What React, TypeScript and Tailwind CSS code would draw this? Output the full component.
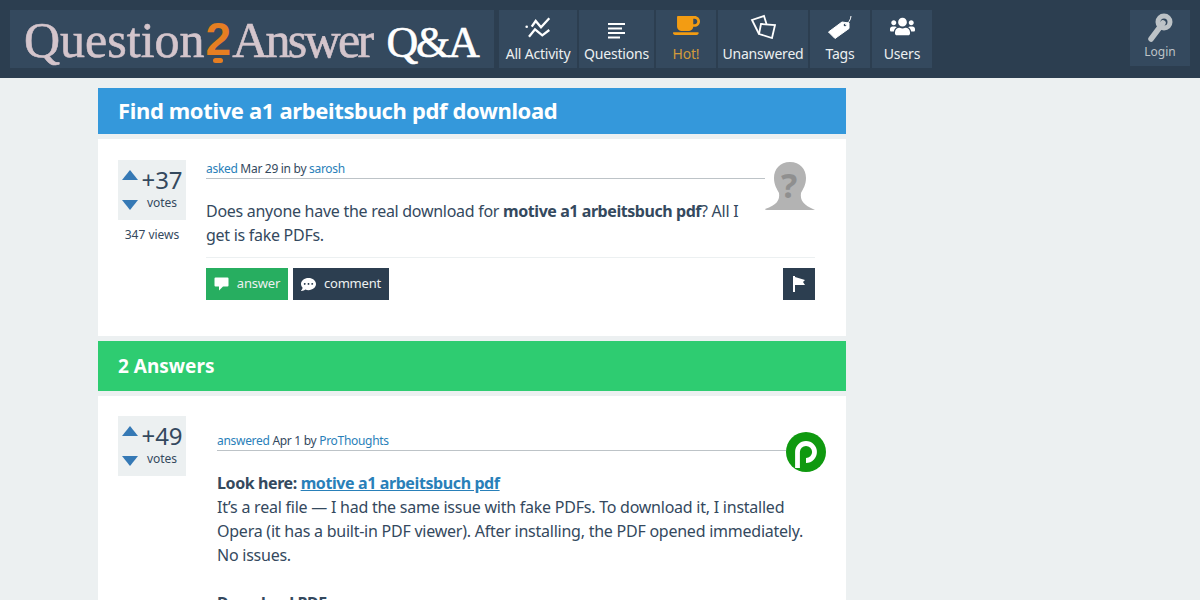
import { ReactNode } from "react";
import { FaCoffee, FaUsers, FaCommentDots } from "react-icons/fa";

const ActivityIcon = () => (
  <svg width="28" height="24" viewBox="0 0 28 24" fill="none" stroke="white" strokeWidth="2.3">
    <path d="M7.7 11.7 L11.7 6 L17 12.3 L25.3 3.3" />
    <path d="M5 21.7 L11 14.3 L18.3 20.3 L25.3 15" />
    <circle cx="2.7" cy="11.7" r="1.3" fill="white" stroke="none" />
  </svg>
);

const LinesIcon = () => (
  <svg width="17" height="16" viewBox="0 0 17 16" fill="white">
    <rect x="0" y="0" width="17" height="2" />
    <rect x="0" y="4.5" width="14" height="2" />
    <rect x="0" y="9" width="17" height="2" />
    <rect x="0" y="13.5" width="12" height="2" />
  </svg>
);

const CardsIcon = () => (
  <svg width="26" height="26" viewBox="0 0 26 26" fill="none" stroke="white" strokeWidth="1.8">
    <path d="M9 21 L2 7 L14 3 L16.5 11" />
    <path d="M11 11 L25 12 L22 25 L9 21 Z" />
  </svg>
);

const TagIcon = () => (
  <svg width="24" height="26" viewBox="0 0 24 26">
    <path d="M0.5 19 L14 9 L21 10 L21 15.5 L7 25.5 Z" fill="white" stroke="white" strokeLinejoin="round" />
    <circle cx="17" cy="12" r="1.3" fill="#34495e" />
    <path d="M17 12 Q22.5 9 23 3" fill="none" stroke="white" strokeWidth="1" />
  </svg>
);

const KeyIcon = () => (
  <svg width="26" height="30" viewBox="0 0 26 30">
    <path d="M16 10 L4 26" stroke="#bdc3c7" strokeWidth="5.5" strokeLinecap="round" />
    <circle cx="17" cy="9" r="6" fill="none" stroke="#bdc3c7" strokeWidth="5" />
  </svg>
);

const FlagIcon = () => (
  <svg width="16" height="18" viewBox="0 0 16 18" fill="white">
    <rect x="2" y="1" width="2" height="16" />
    <path d="M4 2 L14 5 L12 7 L14 10 L4 10 Z" />
  </svg>
);

const BubbleIcon = () => (
  <svg width="15" height="14" viewBox="0 0 15 14" fill="white">
    <path d="M1.5 0.5 H13.5 Q14.5 0.5 14.5 1.5 V8.5 Q14.5 9.5 13.5 9.5 H9 L5 13.5 V9.5 H1.5 Q0.5 9.5 0.5 8.5 V1.5 Q0.5 0.5 1.5 0.5 Z" />
  </svg>
);

const NavItem = ({ icon, label, className, hot }: { icon: ReactNode; label: string; className: string; hot?: boolean }) => (
  <a className={`flex h-[58px] flex-col items-center bg-[#34495e] ${className}`}>
    <div className="flex h-[29px] items-end justify-center">{icon}</div>
    <span className={`mt-[5px] text-[14px] leading-[20px] tracking-[-0.2px] ${hot ? "text-[#d19a3c]" : "text-[#ecf0f1]"}`}>
      {label}
    </span>
  </a>
);

const VoteBox = ({ votes }: { votes: string }) => (
  <div className="flex h-[60px] w-[68px] bg-[#ecf0f1]">
    <div className="ml-1 flex w-4 flex-col items-center pt-[10px]">
      <div className="h-0 w-0 border-x-8 border-b-[10px] border-x-transparent border-b-[#3579b5]" />
      <div className="mt-[20px] h-0 w-0 border-x-8 border-t-[10px] border-x-transparent border-t-[#3579b5]" />
    </div>
    <div className="flex-1 text-center">
      <div className="mt-[6px] text-[24px] leading-[28px] text-[#34495e]">{votes}</div>
      <div className="text-[12px] leading-[18px] text-[#34495e]">votes</div>
    </div>
  </div>
);

const SilhouetteAvatar = () => (
  <svg width="50" height="48" viewBox="0 0 50 48" className="shrink-0">
    <path
      d="M25 0 C15 0 9 7 9 16 C9 23 12 27 14 31 C15 38 12 43 0 47 Q0 48 2 48 L50 48 C38 43 35 38 36 31 C38 27 41 23 41 16 C41 7 35 0 25 0 Z"
      fill="#b3b3b3"
    />
    <text x="24" y="36" textAnchor="middle" fontSize="34" fontWeight="700" fill="#8f8f8f" fontFamily="'Noto Sans',sans-serif">
      ?
    </text>
  </svg>
);

const GreenAvatar = () => (
  <svg width="40" height="40" viewBox="0 0 40 40" className="shrink-0">
    <circle cx="20" cy="20" r="20" fill="#0f990f" />
    <path d="M11.5 36 L11.5 20 A8.5 8.5 0 1 1 20 28.5" fill="none" stroke="white" strokeWidth="4.8" />
  </svg>
);

const Meta = ({ children }: { children: ReactNode }) => (
  <div className="text-[12px] leading-[18px] tracking-[-0.3px] text-[#34495e]">{children}</div>
);

const Blue = ({ children }: { children: ReactNode }) => <a className="text-[#2980b9]">{children}</a>;

export default function App() {
  return (
    <div className="h-[600px] overflow-hidden bg-[#ecf0f1] font-['Noto_Sans','Open_Sans',sans-serif]">
      <header className="flex h-[78px] items-start justify-between bg-[#2c3e50] px-[10px] pt-[10px]">
        <div className="flex gap-[5px]">
          <div className="flex h-[58px] w-[484px] items-baseline bg-[#34495e] pl-[14px] pt-[5px] font-['Liberation_Serif',serif] text-[50px] leading-none text-[#d4c5cc] [-webkit-text-stroke:0.6px_#d4c5cc]">
            <span>Question</span>
            <span className="relative ml-[1px] -translate-y-[2px] font-['Liberation_Sans',sans-serif] text-[46px] font-bold text-[#e67e22] [-webkit-text-stroke:0px_#e67e22]">
              2
              <span className="absolute bottom-[-1px] left-[7px] h-[5px] w-[10px] rounded-full bg-[#e67e22]" />
            </span>
            <span className="ml-[1px] tracking-[-2.7px]">Answer</span>
            <span className="ml-[15px] text-[44px] tracking-[-2.2px] text-white [-webkit-text-stroke:0.6px_#ffffff]">Q&amp;A</span>
          </div>
          <nav className="flex gap-[2px]">
            <NavItem className="w-[78px]" icon={<ActivityIcon />} label="All Activity" />
            <NavItem className="w-[75px]" icon={<LinesIcon />} label="Questions" />
            <NavItem className="w-[60px]" icon={<FaCoffee size={27} color="#f39c12" />} label="Hot!" hot />
            <NavItem className="w-[90px]" icon={<CardsIcon />} label="Unanswered" />
            <NavItem className="w-[60px]" icon={<TagIcon />} label="Tags" />
            <NavItem className="w-[60px]" icon={<FaUsers size={25} color="white" />} label="Users" />
          </nav>
        </div>
        <a className="flex h-[56px] w-[60px] flex-col items-center bg-[#34495e] pt-[3px]">
          <KeyIcon />
          <span className="mt-0 text-[12px] leading-[18px] text-[#bdc3c7]">Login</span>
        </a>
      </header>

      <main className="ml-[98px] mt-[10px] w-[748px]">
        <h1 className="flex h-[46px] items-center bg-[#3498db] pb-[2px] pl-5 text-[22px] font-bold tracking-[-0.36px] text-white">
          Find motive a1 arbeitsbuch pdf download
        </h1>

        <section className="mt-[5px] flex h-[197px] bg-white pl-5 pr-[31px] pt-[21px]">
          <div className="w-[68px] shrink-0">
            <VoteBox votes="+37" />
            <div className="mt-[6px] text-center text-[12px] leading-[18px] text-[#34495e]">347 views</div>
          </div>
          <div className="ml-5 flex-1">
            <div className="flex items-start">
              <div className="flex-1 border-b border-[#bdc3c7]">
                <Meta>
                  <Blue>asked</Blue> Mar 29 in by <Blue>sarosh</Blue>
                </Meta>
              </div>
              <div className="mt-[2px]">
                <SilhouetteAvatar />
              </div>
            </div>
            <p className="-mt-[11px] w-[545px] text-[16px] leading-[24px] tracking-[-0.28px] text-[#34495e]">
              Does anyone have the real download for <b className="tracking-[-0.44px]">motive a1 arbeitsbuch pdf</b>? All I get is
              fake PDFs.
            </p>
            <div className="mt-[10px] border-t border-[#ecf0f1] pt-[10px]">
              <div className="flex items-center">
                <button className="flex h-8 w-[82px] items-center justify-center gap-2 bg-[#27ae60] text-[13px] tracking-[-0.2px] text-[#ecf0f1]">
                  <BubbleIcon />
                  answer
                </button>
                <button className="ml-[5px] flex h-8 w-[96px] items-center justify-center gap-2 bg-[#2c3e50] text-[13px] tracking-[-0.2px] text-[#ecf0f1]">
                  <FaCommentDots size={15} color="white" />
                  comment
                </button>
                <button className="ml-auto flex h-8 w-8 items-center justify-center bg-[#2c3e50]">
                  <FlagIcon />
                </button>
              </div>
            </div>
          </div>
        </section>

        <h2 className="mt-[5px] flex h-[50px] items-center bg-[#2ecc71] pl-5 text-[19px] font-bold text-white">2 Answers</h2>

        <section className="mt-[5px] flex h-[220px] bg-white pl-5 pr-5 pt-5">
          <div className="w-[68px] shrink-0">
            <VoteBox votes="+49" />
          </div>
          <div className="ml-[31px] flex-1">
            <div className="flex items-start pt-4">
              <div className="flex-1 border-b border-[#bdc3c7]">
                <Meta>
                  <Blue>answered</Blue> Apr 1 by <Blue>ProThoughts</Blue>
                </Meta>
              </div>
              <GreenAvatar />
            </div>
            <div className="-mt-[1px] text-[16px] leading-[24px] tracking-[-0.24px] text-[#34495e]">
              <p className="font-bold tracking-[-0.4px]">
                Look here: <a className="text-[#2980b9] underline">motive a1 arbeitsbuch pdf</a>
              </p>
              <p>It’s a real file — I had the same issue with fake PDFs. To download it, I installed</p>
              <p>Opera (it has a built-in PDF viewer). After installing, the PDF opened immediately.</p>
              <p>No issues.</p>
              <p className="mt-6 font-bold tracking-[-0.4px]">Download PDF</p>
            </div>
          </div>
        </section>
      </main>
    </div>
  );
}
